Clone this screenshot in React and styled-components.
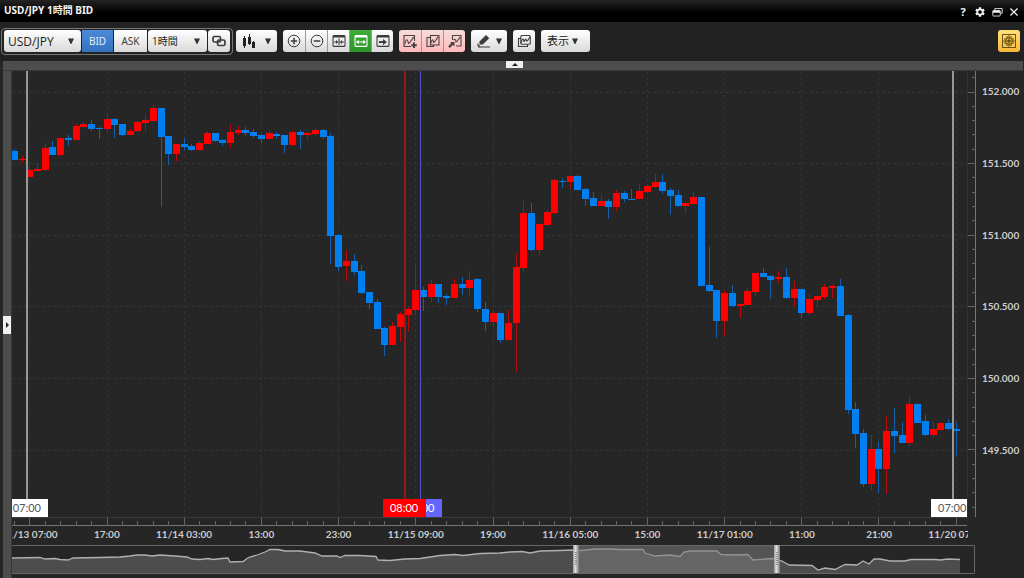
import React from "react";
import styled, { createGlobalStyle, css } from "styled-components";
import { MdSettings } from "react-icons/md";

const Global = createGlobalStyle`
  * { box-sizing: border-box; }
  body {
    margin: 0;
    background: #262626;
    font-family: "Open Sans", "Noto Sans CJK JP", sans-serif;
    font-size: 10px;
  }
  button, select { font: inherit; color: inherit; margin: 0; padding: 0; }
`;

/* ---------- data ---------- */

// [direction, body top, body bottom, wick top, wick bottom]
const CANDLES = [
  ["d", 151, 160, 149, 160], ["u", 159, 160, 156, 163], ["u", 170, 177, 165, 177],
  ["u", 169, 171, 163, 171], ["u", 148, 170, 143, 171], ["d", 147, 155, 141, 155],
  ["u", 138, 155, 138, 156], ["d", 138, 140, 135, 146], ["u", 126, 140, 124, 140],
  ["u", 124, 127, 122, 129], ["d", 124, 129, 120, 131], ["d", 128, 129, 127, 139],
  ["u", 119, 129, 113, 132], ["d", 119, 125, 118, 138], ["d", 124, 135, 124, 136],
  ["u", 131, 135, 129, 135], ["u", 122, 131, 121, 132], ["u", 120, 123, 115, 132],
  ["u", 108, 121, 105, 122], ["d", 108, 137, 108, 207], ["d", 136, 154, 136, 165],
  ["u", 144, 154, 144, 161], ["d", 144, 147, 138, 150], ["d", 146, 150, 144, 151],
  ["u", 143, 150, 141, 150], ["u", 133, 144, 131, 144], ["d", 133, 141, 133, 142],
  ["d", 140, 143, 139, 146], ["u", 132, 143, 124, 148], ["u", 130, 133, 126, 135],
  ["d", 130, 133, 127, 136], ["d", 132, 136, 129, 138], ["d", 135, 139, 134, 143],
  ["u", 133, 139, 131, 139], ["d", 134, 136, 132, 139], ["d", 135, 145, 135, 153],
  ["u", 132, 145, 131, 146], ["d", 132, 135, 130, 149], ["u", 133, 135, 132, 140],
  ["u", 130, 134, 129, 136], ["d", 130, 137, 129, 139], ["d", 136, 236, 133, 264],
  ["d", 235, 267, 234, 271], ["u", 261, 266, 250, 281], ["d", 261, 272, 254, 275],
  ["d", 271, 293, 265, 294], ["d", 292, 303, 292, 309], ["d", 302, 329, 299, 329],
  ["d", 328, 345, 327, 356], ["u", 326, 345, 322, 345], ["u", 314, 327, 312, 342],
  ["u", 309, 315, 307, 331], ["u", 290, 310, 265, 315], ["d", 290, 297, 287, 311],
  ["u", 284, 297, 280, 302], ["d", 284, 297, 284, 303], ["d", 296, 298, 294, 305],
  ["u", 284, 298, 279, 298], ["d", 284, 288, 277, 295], ["u", 280, 288, 271, 297],
  ["d", 279, 309, 278, 312], ["d", 309, 322, 302, 331], ["u", 313, 322, 310, 327],
  ["d", 313, 340, 313, 343], ["u", 323, 340, 310, 340], ["u", 267, 323, 253, 372],
  ["u", 213, 268, 201, 271], ["d", 213, 250, 203, 251], ["u", 224, 250, 223, 255],
  ["u", 212, 225, 210, 226], ["u", 180, 213, 179, 214], ["d", 181, 182, 178, 188],
  ["u", 176, 182, 176, 189], ["d", 176, 190, 175, 190], ["d", 189, 199, 188, 206],
  ["d", 198, 206, 192, 206], ["u", 201, 206, 195, 206], ["d", 201, 207, 199, 219],
  ["u", 193, 207, 190, 211], ["d", 193, 199, 191, 202], ["d", 199, 200, 189, 200],
  ["u", 191, 199, 184, 199], ["u", 186, 192, 184, 193], ["u", 182, 187, 174, 188],
  ["d", 182, 191, 174, 194], ["d", 190, 196, 188, 215], ["d", 195, 206, 190, 207],
  ["u", 203, 206, 202, 213], ["u", 197, 204, 192, 204], ["d", 197, 286, 197, 286],
  ["d", 285, 291, 247, 292], ["d", 290, 321, 290, 338], ["u", 293, 321, 291, 336],
  ["d", 293, 306, 285, 307], ["u", 304, 306, 304, 318], ["u", 291, 305, 288, 305],
  ["u", 273, 292, 273, 296], ["d", 273, 277, 268, 277], ["d", 276, 280, 275, 299],
  ["u", 277, 279, 271, 283], ["d", 277, 298, 268, 299], ["u", 289, 298, 281, 307],
  ["d", 289, 313, 289, 318], ["u", 299, 313, 294, 315], ["u", 296, 300, 295, 307],
  ["u", 287, 297, 284, 299], ["u", 286, 288, 285, 298], ["d", 286, 316, 279, 316],
  ["d", 315, 410, 314, 414], ["d", 409, 434, 402, 448], ["d", 433, 484, 429, 487],
  ["u", 449, 484, 435, 490], ["d", 449, 469, 441, 493], ["u", 431, 469, 416, 494],
  ["d", 431, 436, 408, 453], ["d", 435, 443, 422, 443], ["u", 404, 443, 396, 446],
  ["d", 404, 423, 403, 423], ["d", 421, 435, 415, 436], ["u", 429, 435, 422, 438],
  ["u", 423, 430, 423, 430], ["d", 423, 429, 419, 430], ["d", 429, 431, 422, 456],
];

const OVERVIEW = [
  [12, 558], [40, 557.5], [45, 559], [55, 558.5], [60, 559.5], [68, 560], [73, 558], [100, 557.5],
  [120, 557], [130, 556], [137, 555], [145, 555], [152, 556], [160, 555], [175, 556], [187, 557],
  [192, 559], [200, 559.5], [208, 558.5], [213, 559.5], [222, 558.5], [228, 558], [230, 562],
  [243, 561.5], [247, 558.5], [250, 557], [257, 555], [265, 552], [270, 549.5], [278, 549.5],
  [285, 551], [300, 551], [315, 553], [322, 556], [337, 556], [340, 557.5], [345, 555.5],
  [360, 555.5], [376, 556.5], [378, 560], [390, 560.5], [405, 559], [420, 558.5], [440, 555.5],
  [455, 554.5], [463, 555.5], [480, 553.5], [500, 553], [510, 552], [522, 551.5], [530, 553],
  [540, 551], [560, 550.5], [574, 550], [582, 550.5], [595, 549], [610, 549], [620, 549.5],
  [643, 549.5], [645, 553], [655, 556], [670, 555], [680, 556.5], [684, 552], [690, 551],
  [717, 551], [721, 554.5], [735, 555], [748, 554.5], [753, 560], [765, 559], [773, 558.5],
  [782, 561], [789, 565], [812, 565.5], [818, 570], [825, 568], [835, 569.5], [845, 564.5],
  [857, 565], [863, 561], [869, 564], [874, 559], [880, 559], [890, 561], [905, 561],
  [911, 559.5], [935, 559.5], [940, 560], [948, 559], [960, 559.5],
];

const PRICES = ["152.000", "151.500", "151.000", "150.500", "150.000", "149.500"];
const TIMES = [
  "11/13 07:00", "17:00", "11/14 03:00", "13:00", "23:00", "11/15 09:00", "19:00",
  "11/16 05:00", "15:00", "11/17 01:00", "11:00", "21:00", "11/20 07:00",
];

const STEP = 7.72;
const candleX = (i) => Math.floor(29.8 + (i - 2) * STEP);
const PRICE_STEP = 71.6;
const priceY = (i) => Math.floor(92 + i * PRICE_STEP);

/* ---------- frame ---------- */

const Page = styled.div`
  display: flex;
  flex-direction: column;
  height: 100vh;
  min-height: 320px;
  overflow: hidden;
  background: #262626;
  color: #ccc;
`;

const TitleBar = styled.header`
  display: flex;
  align-items: center;
  justify-content: space-between;
  height: 22px;
  padding: 0 2px 0 4px;
  background: linear-gradient(#242424, #000 60%);
`;

const Title = styled.h1`
  margin: 0;
  padding-bottom: 2px;
  font-family: "Noto Sans", "Noto Sans CJK JP", sans-serif;
  font-size: 10px;
  line-height: 16px;
  font-weight: 700;
  color: #f2f2f2;
`;

const WindowControls = styled.div`
  display: flex;
  gap: 1px;
  padding-top: 2px;
`;

const WindowButton = styled.button`
  display: grid;
  place-items: center;
  width: 16px;
  height: 16px;
  border: 0;
  background: none;
  color: #f0f0f0;
  font-size: 11px;
  font-weight: 700;
  line-height: 16px;
`;

const Toolbar = styled.div`
  display: flex;
  align-items: center;
  gap: 6px;
  height: 39px;
  padding: 0 4px 1px 1px;
  background: #222;
`;

const SymbolGroup = styled.div`
  display: flex;
  align-items: center;
  gap: 1px;
  height: 27px;
  padding: 0 2px;
  margin-right: -3px;
  border: 1px solid #777;
  border-radius: 4px;
`;

const tones = {
  plain: css`background: linear-gradient(#fff, #d9d9d9); color: #3c3c3c;`,
  blue: css`background: linear-gradient(#4a8ad6, #3573bf); color: #e4eefb;`,
  green: css`background: linear-gradient(#3fae3a, #2c9428); color: #fff;`,
  pink: css`background: linear-gradient(#f6dcdc, #ffbaba); color: #4a4444;`,
  yellow: css`background: linear-gradient(#ffe07a, #f8b63c); color: #6b5310;`,
};

const ToolButton = styled.button`
  display: flex;
  align-items: center;
  justify-content: center;
  gap: ${(p) => p.$gap || 5}px;
  width: ${(p) => p.$w || 22}px;
  height: 22px;
  border: 0;
  border-radius: 3px;
  line-height: 20px;
  ${(p) => tones[p.$tone || "plain"]}
`;

const ButtonGroup = styled.div`
  display: flex;
  border-radius: 3px;
  overflow: hidden;

  ${ToolButton} { border-radius: 0; }
  ${ToolButton} + ${ToolButton} { border-left: 1px solid #999; }
`;

const SideButton = styled(ToolButton)`
  font-family: "Noto Sans", sans-serif;
  border-radius: 0;
`;

const MenuButton = styled(ToolButton)`
  justify-content: flex-start;
  padding-left: 6px;
  font-size: 11px;
  color: #222;
`;

const PickerBox = styled.label`
  display: grid;
  align-items: center;
  width: ${(p) => p.$w}px;
  height: 22px;
  border-radius: 3px;
  ${tones.plain}
  > * { grid-area: 1 / 1; }
  > svg { justify-self: end; margin-right: 7px; pointer-events: none; }
`;

const Picker = styled.select`
  appearance: none;
  width: 100%;
  height: 22px;
  padding: 0 16px 0 4px;
  border: 0;
  background: none;
  font-size: ${(p) => p.$size}px;
  color: #222;
`;

const Spacer = styled.div`
  flex: 1;
`;

const Band = styled.div`
  display: flex;
  justify-content: center;
  align-items: flex-start;
  height: 10px;
  margin: 0 1px 0 3px;
  padding-left: 3px;
  background: #4d4d4d;
  border-bottom: 1px solid #383838;
`;

const SideBand = styled.div`
  display: flex;
  align-items: center;
  width: 9px;
  margin-left: 3px;
  background: #4d4d4d;
  border-right: 1px solid #383838;
`;

const FoldTab = styled.button`
  display: grid;
  place-items: center;
  width: ${(p) => (p.$side ? 8 : 17)}px;
  height: ${(p) => (p.$side ? 18 : 7)}px;
  border: 0;
  background: #f0f0f0;
  color: #222;
`;

const Workspace = styled.div`
  display: flex;
  flex: 1;
  min-height: 0;
`;

const ChartGrid = styled.main`
  display: grid;
  flex: 1;
  min-width: 0;
  grid-template-columns: minmax(0, 1fr) 56px;
  grid-template-rows: minmax(0, 1fr) 27px 33px;
  font-family: Lato, sans-serif;
  font-size: 10px;
  font-weight: 700;
`;

/* ---------- chart ---------- */

const Plot = styled.div`
  position: relative;
  overflow: hidden;
  border-right: 1px solid #333;
  border-bottom: 1px solid #3c3c3c;
`;

const Drawing = styled.svg`
  display: block;
  width: 100%;
  height: 100%;
`;

const Cursor = styled.div`
  position: absolute;
  top: 0;
  bottom: 0;
  left: ${(p) => p.$at}%;
  width: ${(p) => p.$w || 1}px;
  background: ${(p) => p.$line};
`;

const CursorTag = styled.span`
  position: absolute;
  bottom: 0;
  left: -21px;
  width: 43px;
  height: 18px;
  font-size: 11px;
  font-weight: 400;
  line-height: 17px;
  text-align: center;
  background: ${(p) => p.$bg};
  color: ${(p) => p.$ink};
`;

const PriceAxis = styled.div`
  display: grid;
  grid-template-columns: 8px 1fr;
`;

const PriceLabels = styled.div`
  display: grid;
  grid-template-rows: 20fr repeat(5, 72fr) 68fr;
  padding-left: 6px;
`;

const PriceLabel = styled.span`
  align-self: end;
  height: 0;
  line-height: 0;
`;

const TimeAxis = styled.div`
  display: grid;
  grid-template-rows: 8px 18px;
  overflow: hidden;
`;

const TimeLabels = styled.div`
  display: grid;
  grid-template-columns: repeat(13, minmax(0, 1fr));
  margin: 0 -27px 0 -21px;
  line-height: 16px;
`;

const TimeLabel = styled.span`
  justify-self: center;
  white-space: nowrap;
`;

const Overview = styled.div`
  grid-column: 1 / 3;
  height: 29px;
  margin-right: 49px;
`;

/* ---------- icons ---------- */

const Arrow = () => (
  <svg width="6" height="6" viewBox="0 0 6 6" aria-hidden="true">
    <path d="M0 .5h6L3.400 6h-.800z" fill="#333" />
  </svg>
);

const Icon = ({ size = 14, children }) => (
  <svg width={size} height={size} viewBox="0 0 14 14" fill="none" stroke="currentColor" strokeWidth="1.1" aria-hidden="true">
    {children}
  </svg>
);

const ICONS = {
  link: <g strokeWidth="1.7"><rect x="1" y="2.5" width="7.5" height="5.5" rx="1.5" /><rect x="5.5" y="6" width="7.5" height="5.5" rx="1.5" /></g>,
  candles: <g fill="#222" stroke="none"><rect x="1" y="4" width="3" height="8" /><rect x="2" y="2" width="1" height="12" /><rect x="6" y="3" width="3" height="7" /><rect x="7" y="0" width="1" height="11" /><rect x="10" y="8" width="3" height="6" /><rect x="11" y="7" width="1" height="7" /></g>,
  zoomIn: <g><circle cx="7" cy="7" r="5.8" strokeWidth="1" /><path d="M3.800 7h6.400M7 3.800v6.400" strokeWidth="1.5" /></g>,
  zoomOut: <g><circle cx="7" cy="7" r="5.8" strokeWidth="1" /><path d="M3.800 7h6.400" strokeWidth="1.5" /></g>,
  narrow: <g><rect x="1" y="1.6" width="12" height="10.8" rx="1" /><path d="M1 2.6h12" strokeWidth="2" /><path d="M7 4.5v6.5M2 8h3M12 8H9" /><path d="M4 6l2.3 2L4 10zM10 6L7.700 8 10 10z" fill="currentColor" stroke="none" /></g>,
  widen: <g><rect x="1" y="1.600" width="12" height="10.800" rx="1" /><path d="M1 2.600h12" strokeWidth="2" /><path d="M4 8h6" /><path d="M4.800 5.800L2 8l2.800 2.200zM9.200 5.800L12 8l-2.800 2.200z" fill="currentColor" stroke="none" /></g>,
  latest: <g><rect x="1" y="1.600" width="12" height="10.800" rx="1" /><path d="M1 2.600h12" strokeWidth="2" /><path d="M3 7h4V5l4 3-4 3V9H3z" fill="currentColor" stroke="none" /></g>,
  addChart: <g><path d="M8 12.500H1V1.500h10.500V7" /><path d="M1.500 10.500C3.500 3.500 4.500 5 5.500 9.500 7.500 9 8.500 5 11 3" /><path d="M11 8.500v5.500M8.200 11.200h5.600" strokeWidth="2" /></g>,
  copyChart: <g><path d="M4 3.500H1v9h6.500V11" /><rect x="4.500" y="1.500" width="8.500" height="9.500" /><path d="M4.500 10C6 5 7 4.500 7.500 8.500 9.500 8 10.500 4 12.500 2.500" /></g>,
  popChart: <g><path d="M4.500 6V1.500H13V12H8" /><path d="M5.500 6C7 4.500 7.500 5 8 8 9.500 7.500 10.500 4.500 12.500 3" /><path d="M1 13.200l4-4" strokeWidth="2.400" /><path d="M2 8h4.500v4.500z" fill="currentColor" stroke="none" /></g>,
  pen: <g><path d="M2.500 10.500V7.500L9 1l3.300 3.200-6.500 6.300z" fill="currentColor" stroke="none" /><path d="M1 9.500v2l2 .5M1 13h12" /></g>,
  stack: <g><path d="M4 4.500H1.500v8h9V10.500" /><rect x="3.800" y="1.500" width="9.500" height="8.800" rx="1" /><path d="M4 9C5.500 4 6.500 4 7 7.500 8 7.500 8 5 9 5 9.500 8 10.500 8 12.800 3" /></g>,
  crosshair: <g strokeWidth="1"><rect x=".5" y=".5" width="13" height="13" /><path d="M7 1v12M1 7h12M2 5h3V2M12 5H9V2M2 9h3v3M12 9H9v3" /><circle cx="7" cy="7" r="3.500" /><circle cx="7" cy="7" r="1.200" fill="currentColor" /></g>,
  restore: <g><path d="M3.500 4V2h9.500v6h-2" /><rect x="1" y="4.500" width="9.500" height="7" rx="1" /><path d="M1 6h9.500" strokeWidth="2.600" /></g>,
  close: <path d="M2 2l10 10M12 2L2 12" strokeWidth="1.800" />,
};

const Tool = ({ icon, label, arrow, ...rest }) => (
  <ToolButton type="button" aria-label={label} {...rest}>
    <Icon>{ICONS[icon]}</Icon>
    {arrow && <Arrow />}
  </ToolButton>
);

/* ---------- drawings ---------- */

function CandleChart() {
  return (
    <Drawing viewBox="12 71 955 446" preserveAspectRatio="none" shapeRendering="crispEdges" role="img" aria-label="USD/JPY">
      <g stroke="#343434" strokeDasharray="3 3">
        {PRICES.map((p, i) => (
          <line key={p} x1="12" x2="967" y1={priceY(i) + 0.5} y2={priceY(i) + 0.5} />
        ))}
        {TIMES.map((t, i) => {
          const x = candleX(2 + i * 10) + 0.5;
          return <line key={i} x1={x} x2={x} y1="71" y2="517" />;
        })}
      </g>
      {CANDLES.map(([dir, top, bottom, high, low], i) => {
        const x = candleX(i);
        return (
          <g key={i}>
            <rect x={x} y={high} width="1" height={low - high} fill={dir === "u" ? "#b80c0c" : "#1260ac"} />
            <rect x={x - 3} y={top} width="7" height={bottom - top} fill={dir === "u" ? "#f00" : "#0080f0"} />
          </g>
        );
      })}
    </Drawing>
  );
}

function PriceTicks() {
  const ticks = [];
  for (let n = -1; n < 30; n += 1) {
    const y = Math.floor(92 + (n * PRICE_STEP) / 5);
    ticks.push(<rect key={n} x={n % 5 === 0 ? 0 : 4} y={y} width={n % 5 === 0 ? 8 : 4} height="1" />);
  }
  return (
    <Drawing viewBox="0 71 8 447" preserveAspectRatio="none" shapeRendering="crispEdges" fill="#666" aria-hidden="true">
      <rect x="7" y="71" width="1" height="446" fill="#777" />
      {ticks}
    </Drawing>
  );
}

function TimeTicks() {
  const ticks = [];
  for (let n = -1; n <= 60; n += 1) {
    const major = n % 5 === 0;
    ticks.push(<rect key={n} x={candleX(2 + n * 2)} y={major ? 0 : 3} width="1" height={major ? 8 : 5} />);
  }
  return (
    <Drawing viewBox="12 0 956 8" preserveAspectRatio="none" shapeRendering="crispEdges" fill="#666" aria-hidden="true">
      <rect x="12" y="7" width="955" height="1" fill="#777" />
      {ticks}
    </Drawing>
  );
}

function OverviewChart() {
  const line = OVERVIEW.map((p) => p.join(",")).join(" ");
  const first = OVERVIEW[0][0];
  const last = OVERVIEW[OVERVIEW.length - 1][0];
  return (
    <Drawing viewBox="12 545 963 29" preserveAspectRatio="none" role="img" aria-label="Overview">
      <defs>
        <linearGradient id="grip">
          <stop offset="0" stopColor="#999" />
          <stop offset=".4" stopColor="#e0e0e0" />
          <stop offset="1" stopColor="#777" />
        </linearGradient>
      </defs>
      <polygon points={`${first},573 ${line} ${last},573`} fill="#4d4d4d" />
      <polyline points={line} fill="none" stroke="#b0b0b0" strokeWidth="1.300" />
      <rect x="576" y="545" width="201" height="29" fill="#7a7a7a" fillOpacity=".55" />
      <path d="M12 545.500H974.500V573.500H12" fill="none" stroke="#666" />
      {[573, 774].map((x) => (
        <g key={x}>
          <rect x={x} y="545" width="6" height="28" fill="url(#grip)" />
          <path d={`M${x + 3} 552v14`} stroke="#888" strokeWidth="2" strokeDasharray="1 1" />
        </g>
      ))}
    </Drawing>
  );
}

/* ---------- page ---------- */

export default function App() {
  return (
    <Page>
      <Global />
      <TitleBar>
        <Title>USD/JPY 1時間 BID</Title>
        <WindowControls>
          <WindowButton type="button">?</WindowButton>
          <WindowButton type="button" aria-label="設定"><MdSettings size={12} /></WindowButton>
          <WindowButton type="button" aria-label="復元"><Icon size={11}>{ICONS.restore}</Icon></WindowButton>
          <WindowButton type="button" aria-label="閉じる"><Icon size={10}>{ICONS.close}</Icon></WindowButton>
        </WindowControls>
      </TitleBar>

      <Toolbar>
        <SymbolGroup>
          <PickerBox $w={77}>
            <Picker $size={12} aria-label="通貨ペア"><option>USD/JPY</option></Picker>
            <Arrow />
          </PickerBox>
          <SideButton type="button" $w={31} $tone="blue" aria-pressed="true">BID</SideButton>
          <SideButton type="button" $w={33} aria-pressed="false">ASK</SideButton>
          <PickerBox $w={59}>
            <Picker $size={10} aria-label="足種"><option>1時間</option></Picker>
            <Arrow />
          </PickerBox>
          <Tool icon="link" label="連動" />
        </SymbolGroup>
        <Tool icon="candles" label="チャート種類" arrow $w={41} $gap={9} />
        <ButtonGroup>
          <Tool icon="zoomIn" label="拡大" />
          <Tool icon="zoomOut" label="縮小" />
          <Tool icon="narrow" label="間隔を狭める" />
          <Tool icon="widen" label="全体表示" $tone="green" />
          <Tool icon="latest" label="最新" />
        </ButtonGroup>
        <ButtonGroup>
          <Tool icon="addChart" label="チャート追加" $tone="pink" />
          <Tool icon="copyChart" label="チャート複製" $tone="pink" />
          <Tool icon="popChart" label="チャート分離" $tone="pink" />
        </ButtonGroup>
        <Tool icon="pen" label="描画" arrow $w={36} />
        <Tool icon="stack" label="テクニカル" />
        <MenuButton type="button" $w={49} $gap={3}>表示<Arrow /></MenuButton>
        <Spacer />
        <Tool icon="crosshair" label="十字カーソル" $tone="yellow" />
      </Toolbar>

      <Band>
        <FoldTab type="button" aria-label="上部を開閉">
          <svg width="6" height="3" viewBox="0 0 6 3"><path d="M0 3L3 0l3 3z" fill="currentColor" /></svg>
        </FoldTab>
      </Band>

      <Workspace>
        <SideBand>
          <FoldTab type="button" $side aria-label="左側を開閉">
            <svg width="3" height="6" viewBox="0 0 3 6"><path d="M0 0l3 3-3 3z" fill="currentColor" /></svg>
          </FoldTab>
        </SideBand>
        <ChartGrid>
          <Plot>
            <CandleChart />
            <Cursor $at={1.5} $w={2} $line="#989898"><CursorTag $bg="#fff" $ink="#555">07:00</CursorTag></Cursor>
            <Cursor $at={42.7} $line="#5050c8"><CursorTag $bg="#66f" $ink="#fff">09:00</CursorTag></Cursor>
            <Cursor $at={41} $w={2} $line="#981616"><CursorTag $bg="#f00" $ink="#fff">08:00</CursorTag></Cursor>
            <Cursor $at={98.4} $w={2} $line="#989898"><CursorTag $bg="#fff" $ink="#555">07:00</CursorTag></Cursor>
          </Plot>
          <PriceAxis>
            <PriceTicks />
            <PriceLabels>
              {PRICES.map((p) => <PriceLabel key={p}>{p}</PriceLabel>)}
            </PriceLabels>
          </PriceAxis>
          <TimeAxis>
            <TimeTicks />
            <TimeLabels>
              {TIMES.map((t, i) => <TimeLabel key={i}>{t}</TimeLabel>)}
            </TimeLabels>
          </TimeAxis>
          <Overview><OverviewChart /></Overview>
        </ChartGrid>
      </Workspace>
    </Page>
  );
}
